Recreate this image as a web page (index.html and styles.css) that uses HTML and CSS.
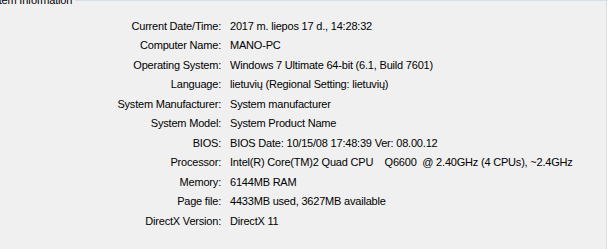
FILE: index.html
```html
<!DOCTYPE html>
<html lang="lt">
<head>
<meta charset="UTF-8">
<meta name="viewport" content="width=device-width, initial-scale=1.0">
<title>System Information</title>
<link rel="stylesheet" href="styles.css">
</head>
<body>

<fieldset class="groupbox">
    <legend>System Information</legend>
    <div class="info-grid">
        <div class="label">Current Date/Time:</div>
        <div class="value">2017 m. liepos 17 d., 14:28:32</div>
        <div class="label">Computer Name:</div>
        <div class="value">MANO-PC</div>
        <div class="label">Operating System:</div>
        <div class="value">Windows 7 Ultimate 64-bit (6.1, Build 7601)</div>
        <div class="label">Language:</div>
        <div class="value">lietuvių (Regional Setting: lietuvių)</div>
        <div class="label">System Manufacturer:</div>
        <div class="value">System manufacturer</div>
        <div class="label">System Model:</div>
        <div class="value">System Product Name</div>
        <div class="label">BIOS:</div>
        <div class="value">BIOS Date: 10/15/08 17:48:39 Ver: 08.00.12</div>
        <div class="label">Processor:</div>
        <div class="value">Intel(R) Core(TM)2 Quad CPU    Q6600  @ 2.40GHz (4 CPUs), ~2.4GHz</div>
        <div class="label">Memory:</div>
        <div class="value">6144MB RAM</div>
        <div class="label">Page file:</div>
        <div class="value">4433MB used, 3627MB available</div>
        <div class="label">DirectX Version:</div>
        <div class="value">DirectX 11</div>
    </div>
</fieldset>

</body>
</html>
```

FILE: styles.css
```css
html, body {
    margin: 0;
    height: 100%;
    background-color: #f0f0f0;
    overflow: hidden;
}
body {
    font-family: "Liberation Sans", Arial, sans-serif;
    font-size: 11px;
    letter-spacing: -0.2px;
    color: #000;
}
.groupbox {
    box-sizing: border-box;
    margin: -6px 0 0 -28px;
    padding: 0;
    height: 255px;
    border: 1px solid #d5dfe5;
    border-left: none;
    border-bottom: none;
    border-right-color: #fff;
    box-shadow: inset -1px 0 0 #d5dfe5;
}
.groupbox legend {
    margin-left: 7px;
    padding: 0 3px 0 2px;
    line-height: 13px;
}
.info-grid {
    display: grid;
    grid-template-columns: 249px auto;
    column-gap: 9px;
    grid-auto-rows: 19.5px;
    align-items: center;
    padding-top: 9px;
}
.label {
    text-align: right;
    white-space: nowrap;
}
.value {
    white-space: pre;
}
```
